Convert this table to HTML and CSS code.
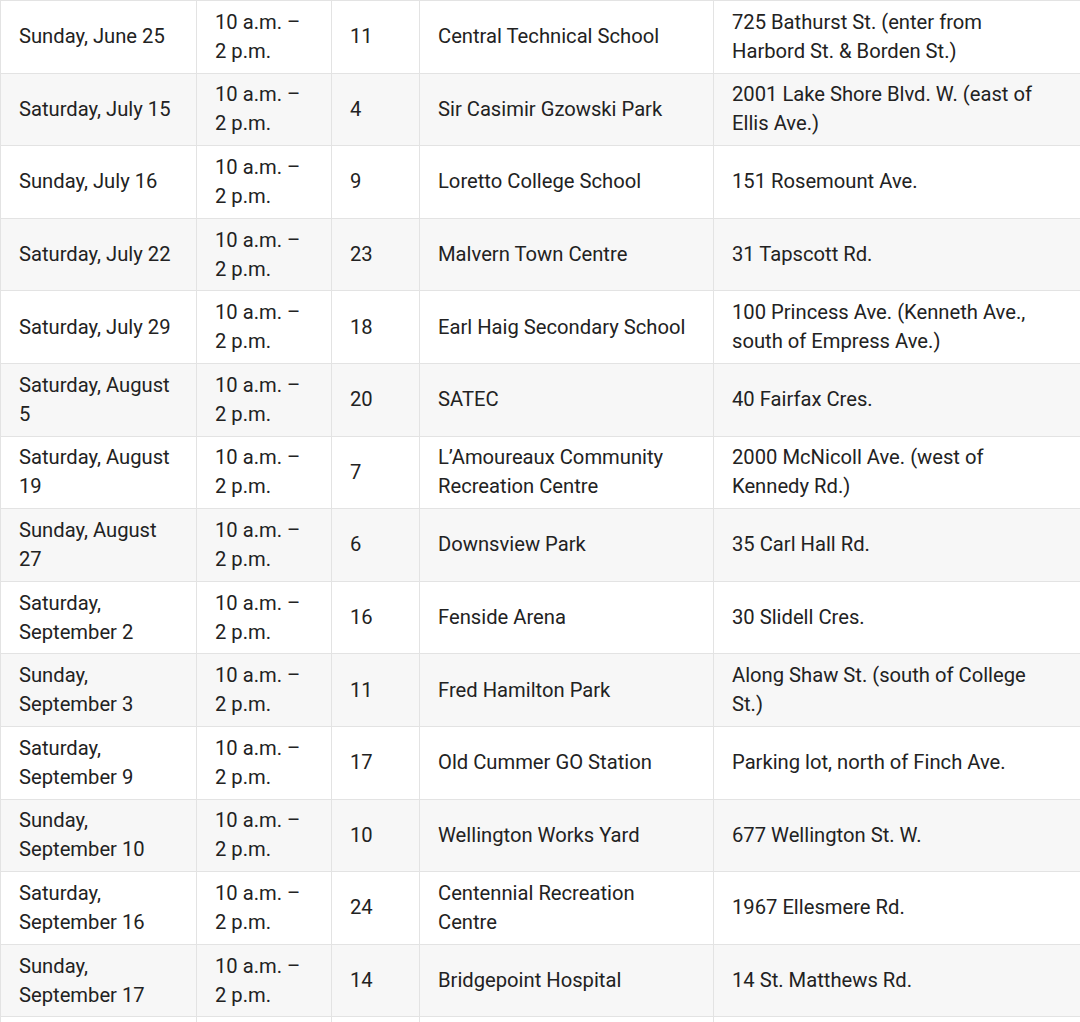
FILE: index.html
```html
<!DOCTYPE html>
<html lang="en">
<head>
<meta charset="utf-8">
<title>Schedule</title>
<link rel="stylesheet" href="styles.css">
</head>
<body>
<table class="schedule">
  <colgroup>
    <col class="c-date"><col class="c-time"><col class="c-ward"><col class="c-loc"><col class="c-addr">
  </colgroup>
  <tbody>
    <tr><td>Sunday, June 25</td><td>10 a.m. – 2 p.m.</td><td>11</td><td>Central Technical School</td><td class="addr">725 Bathurst St. (enter from Harbord St. &amp; Borden St.)</td></tr>
    <tr><td>Saturday, July 15</td><td>10 a.m. – 2 p.m.</td><td>4</td><td>Sir Casimir Gzowski Park</td><td class="addr">2001 Lake Shore Blvd. W. (east of Ellis Ave.)</td></tr>
    <tr><td>Sunday, July 16</td><td>10 a.m. – 2 p.m.</td><td>9</td><td>Loretto College School</td><td class="addr">151 Rosemount Ave.</td></tr>
    <tr><td>Saturday, July 22</td><td>10 a.m. – 2 p.m.</td><td>23</td><td>Malvern Town Centre</td><td class="addr">31 Tapscott Rd.</td></tr>
    <tr><td>Saturday, July 29</td><td>10 a.m. – 2 p.m.</td><td>18</td><td>Earl Haig Secondary School</td><td class="addr">100 Princess Ave. (Kenneth Ave., south of Empress Ave.)</td></tr>
    <tr><td>Saturday, August 5</td><td>10 a.m. – 2 p.m.</td><td>20</td><td>SATEC</td><td class="addr">40 Fairfax Cres.</td></tr>
    <tr><td>Saturday, August 19</td><td>10 a.m. – 2 p.m.</td><td>7</td><td>L’Amoureaux Community Recreation Centre</td><td class="addr">2000 McNicoll Ave. (west of Kennedy Rd.)</td></tr>
    <tr><td>Sunday, August 27</td><td>10 a.m. – 2 p.m.</td><td>6</td><td>Downsview Park</td><td class="addr">35 Carl Hall Rd.</td></tr>
    <tr><td>Saturday, September 2</td><td>10 a.m. – 2 p.m.</td><td>16</td><td>Fenside Arena</td><td class="addr">30 Slidell Cres.</td></tr>
    <tr><td>Sunday, September 3</td><td>10 a.m. – 2 p.m.</td><td>11</td><td>Fred Hamilton Park</td><td class="addr">Along Shaw St. (south of College St.)</td></tr>
    <tr><td>Saturday, September 9</td><td>10 a.m. – 2 p.m.</td><td>17</td><td>Old Cummer GO Station</td><td class="addr">Parking lot, north of Finch Ave.</td></tr>
    <tr><td>Sunday, September 10</td><td>10 a.m. – 2 p.m.</td><td>10</td><td>Wellington Works Yard</td><td class="addr">677 Wellington St. W.</td></tr>
    <tr><td>Saturday, September 16</td><td>10 a.m. – 2 p.m.</td><td>24</td><td>Centennial Recreation Centre</td><td class="addr">1967 Ellesmere Rd.</td></tr>
    <tr><td>Sunday, September 17</td><td>10 a.m. – 2 p.m.</td><td>14</td><td>Bridgepoint Hospital</td><td class="addr">14 St. Matthews Rd.</td></tr>
    <tr class="tail"><td></td><td></td><td></td><td></td><td></td></tr>
  </tbody>
</table>
</body>
</html>
```
FILE: styles.css
```css
html, body {
  margin: 0;
  padding: 0;
  background: #fff;
}
body {
  font-family: Roboto, "Liberation Sans", sans-serif;
  font-size: 20.2px;
  line-height: 29px;
  color: #222;
}
.schedule {
  border-collapse: collapse;
  table-layout: fixed;
  width: 1080px;
}
.c-date { width: 196px; }
.c-time { width: 135px; }
.c-ward { width: 88px; }
.c-loc  { width: 294px; }
.c-addr { width: 367px; }
.schedule td {
  border: 1px solid #e3e3e3;
  padding: 6.8px 18px;
  vertical-align: middle;
  text-align: left;
}
.schedule td.addr {
  padding-right: 28px;
}
.schedule tr:nth-child(even) td {
  background: #f7f7f7;
}
.schedule .tail td {
  height: 58px;
}
```
